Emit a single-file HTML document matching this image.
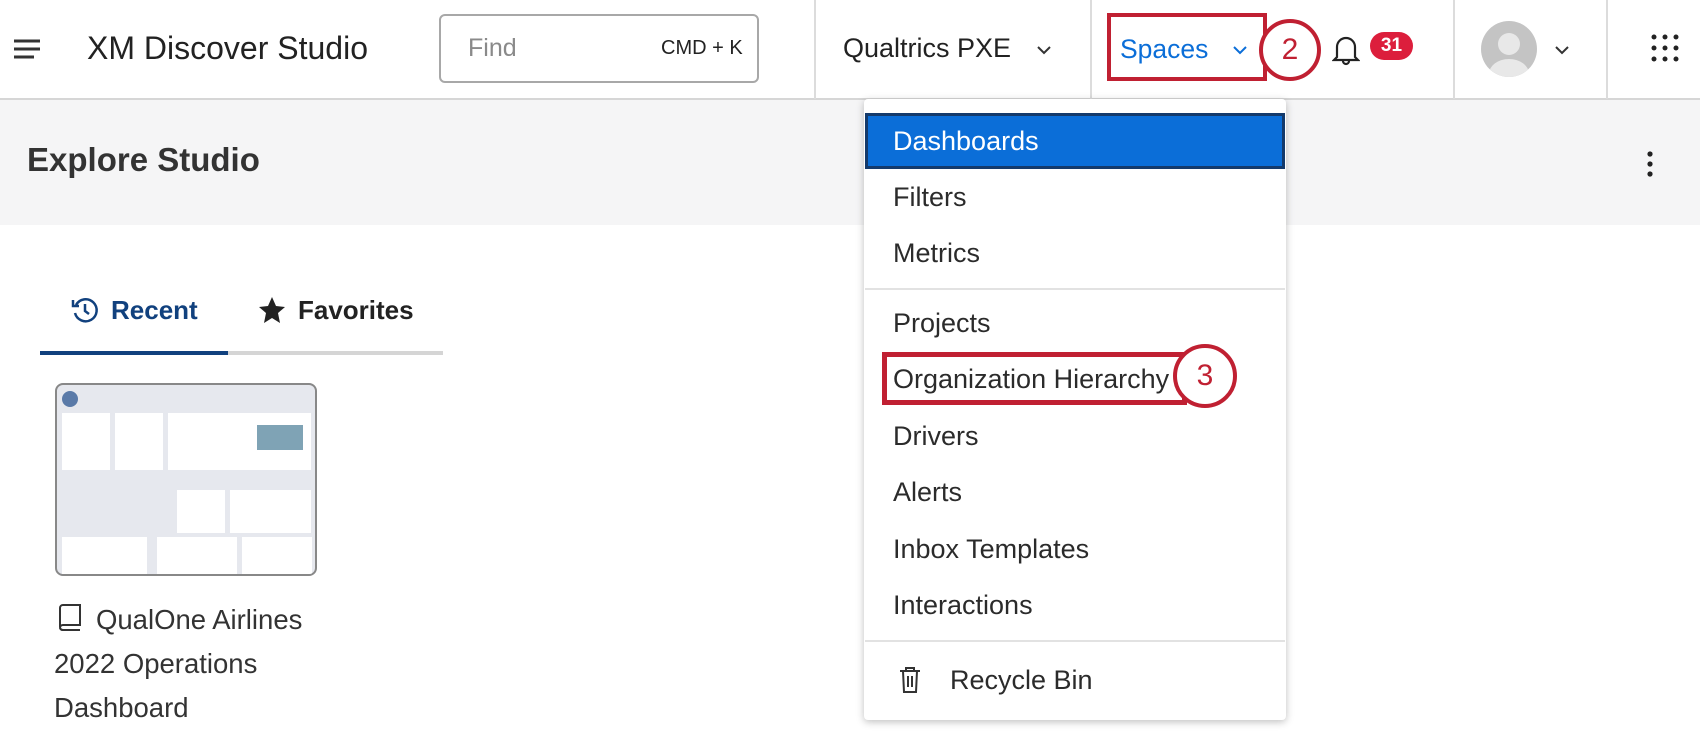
<!DOCTYPE html>
<html><head><meta charset="utf-8"><style>
*{box-sizing:border-box;margin:0;padding:0}
body{width:1700px;height:742px;position:relative;overflow:hidden;background:#fff;font-family:"Liberation Sans",sans-serif;color:#2b2b2b}
.a{position:absolute}
.hdr{left:0;top:0;width:1700px;height:100px;border-bottom:2px solid #d6d6d6;background:#fff}
.sep{top:0;width:2px;height:99px;background:#dcdcdc}
.gray{left:0;top:100px;width:1700px;height:125px;background:#f5f5f6}
.mi{position:absolute;left:893px;font-size:27px;color:#2b2b2b;line-height:30px}
</style></head><body>
<div class="a hdr"></div>
<svg class="a" style="left:14px;top:38px" width="28" height="22"><g stroke="#333" stroke-width="3"><line x1="0" y1="3" x2="26" y2="3"/><line x1="0" y1="11" x2="26" y2="11"/><line x1="0" y1="19" x2="20" y2="19"/></g></svg>
<div class="a" style="left:87px;top:30px;font-size:32px;color:#222">XM Discover Studio</div>
<div class="a" style="left:439px;top:14px;width:320px;height:69px;border:2px solid #a8a8a8;border-radius:6px"></div>
<div class="a" style="left:468px;top:34px;font-size:25px;color:#8a8a8a">Find</div>
<div class="a" style="left:661px;top:37px;font-size:20px;color:#222">CMD + K</div>
<div class="a sep" style="left:814px"></div>
<div class="a" style="left:843px;top:33px;font-size:27px;color:#222">Qualtrics PXE</div>
<svg class="a" style="left:1036px;top:45px" width="16" height="10"><path d="M2 2l6 6 6-6" fill="none" stroke="#333" stroke-width="2"/></svg>
<div class="a sep" style="left:1090px"></div>
<div class="a" style="left:1107px;top:13px;width:160px;height:68px;border:4px solid #c02032"></div>
<div class="a" style="left:1120px;top:34px;font-size:26.5px;color:#0b6ed8">Spaces</div>
<svg class="a" style="left:1232px;top:45px" width="16" height="10"><path d="M2 2l6 6 6-6" fill="none" stroke="#0b6ed8" stroke-width="2"/></svg>
<div class="a" style="left:1259px;top:19px;width:62px;height:62px;border:4px solid #c02032;border-radius:50%;background:#fff;text-align:center;font-size:30px;line-height:54px;color:#c02032">2</div>
<svg class="a" style="left:1332px;top:32px" width="28" height="34"><path d="M5 25V15a9 9 0 0 1 18 0v10l3 3H2z M11 29a3 3 0 0 0 6 0" fill="none" stroke="#222" stroke-width="2.2"/></svg>
<div class="a" style="left:1370px;top:32px;width:43px;height:28px;border-radius:14px;background:#dc1e3c;color:#fff;font-weight:bold;font-size:19px;text-align:center;line-height:28px">31</div>
<div class="a sep" style="left:1453px"></div>
<div class="a" style="left:1481px;top:21px;width:56px;height:56px;border-radius:50%;background:#c4c4c4;overflow:hidden"><div class="a" style="left:17px;top:12px;width:22px;height:22px;border-radius:50%;background:#e8e8e8"></div><div class="a" style="left:8px;top:38px;width:40px;height:30px;border-radius:50%;background:#e8e8e8"></div></div>
<svg class="a" style="left:1554px;top:45px" width="16" height="10"><path d="M2 2l6 6 6-6" fill="none" stroke="#333" stroke-width="2"/></svg>
<div class="a sep" style="left:1606px"></div>
<svg class="a" style="left:1651px;top:34px" width="30" height="30"><g fill="#222"><circle cx="3" cy="3" r="2.5"/><circle cx="14" cy="3" r="2.5"/><circle cx="25" cy="3" r="2.5"/><circle cx="3" cy="14" r="2.5"/><circle cx="14" cy="14" r="2.5"/><circle cx="25" cy="14" r="2.5"/><circle cx="3" cy="25" r="2.5"/><circle cx="14" cy="25" r="2.5"/><circle cx="25" cy="25" r="2.5"/></g></svg>
<div class="a gray"></div>
<div class="a" style="left:27px;top:141px;font-size:33px;font-weight:bold;color:#333">Explore Studio</div>
<svg class="a" style="left:1645px;top:151px" width="10" height="28"><g fill="#222"><circle cx="5" cy="3" r="2.6"/><circle cx="5" cy="13" r="2.6"/><circle cx="5" cy="23" r="2.6"/></g></svg>
<svg class="a" style="left:71px;top:296px" width="28" height="28"><path d="M5 9A11 11 0 1 1 4 17" fill="none" stroke="#11417e" stroke-width="2.5"/><path d="M2 4v6h6" fill="none" stroke="#11417e" stroke-width="2.5"/><path d="M14 8v7l4 3" fill="none" stroke="#11417e" stroke-width="2.5"/></svg>
<div class="a" style="left:111px;top:295px;font-size:26px;font-weight:bold;color:#11417e">Recent</div>
<svg class="a" style="left:258px;top:296px" width="28" height="28"><path d="M14 1l4 9 9 1-7 6 2 10-8-5-8 5 2-10-7-6 9-1z" fill="#222"/></svg>
<div class="a" style="left:298px;top:295px;font-size:26px;font-weight:bold;color:#222">Favorites</div>
<div class="a" style="left:40px;top:351px;width:403px;height:4px;background:#d5d5d5"></div>
<div class="a" style="left:40px;top:351px;width:188px;height:4px;background:#11417e"></div>
<div class="a" style="left:55px;top:383px;width:262px;height:193px;border:2px solid #888;border-radius:8px;background:#e6e8ee;overflow:hidden">
<div class="a" style="left:5px;top:6px;width:16px;height:16px;border-radius:50%;background:#5a7aa8"></div>
<div class="a" style="left:5px;top:28px;width:48px;height:57px;background:#fff"></div>
<div class="a" style="left:58px;top:28px;width:48px;height:57px;background:#fff"></div>
<div class="a" style="left:111px;top:28px;width:143px;height:57px;background:#fff"></div>
<div class="a" style="left:200px;top:40px;width:46px;height:25px;background:#7fa3b5"></div>
<div class="a" style="left:120px;top:105px;width:48px;height:43px;background:#fff"></div>
<div class="a" style="left:173px;top:105px;width:81px;height:43px;background:#fff"></div>
<div class="a" style="left:5px;top:152px;width:85px;height:40px;background:#fff"></div>
<div class="a" style="left:100px;top:152px;width:80px;height:40px;background:#fff"></div>
<div class="a" style="left:185px;top:152px;width:70px;height:40px;background:#fff"></div>
</div>
<svg class="a" style="left:56px;top:603px" width="28" height="28"><path d="M4 24V5a3 3 0 0 1 3-3h17v20H7a3 3 0 0 0-3 3 3 3 0 0 0 3 2h17" fill="none" stroke="#333" stroke-width="2"/></svg>
<div class="a" style="left:96px;top:598px;font-size:27.5px;color:#333;line-height:44px">QualOne Airlines</div>
<div class="a" style="left:54px;top:642px;font-size:27.5px;color:#333;line-height:44px">2022 Operations<br>Dashboard</div>
<div class="a" style="left:864px;top:99px;width:422px;height:621px;background:#fff;border-radius:4px;box-shadow:0 2px 8px rgba(0,0,0,.25)"></div>
<div class="a" style="left:865px;top:113px;width:420px;height:56px;background:#0b6ed8;border:3px solid #143a6b"></div>
<div class="mi" style="top:126px;color:#fff">Dashboards</div>
<div class="mi" style="top:182px">Filters</div>
<div class="mi" style="top:238px">Metrics</div>
<div class="a" style="left:865px;top:288px;width:420px;height:2px;background:#e2e2e2"></div>
<div class="mi" style="top:308px">Projects</div>
<div class="a" style="left:882px;top:352px;width:305px;height:53px;border:5px solid #c02032"></div>
<div class="mi" style="top:364px">Organization Hierarchy</div>
<div class="a" style="left:1173px;top:344px;width:64px;height:64px;border:4px solid #c02032;border-radius:50%;background:#fff;text-align:center;font-size:30px;line-height:56px;color:#c02032">3</div>
<div class="mi" style="top:421px">Drivers</div>
<div class="mi" style="top:477px">Alerts</div>
<div class="mi" style="top:534px">Inbox Templates</div>
<div class="mi" style="top:590px">Interactions</div>
<div class="a" style="left:865px;top:640px;width:420px;height:2px;background:#e2e2e2"></div>
<svg class="a" style="left:898px;top:666px" width="24" height="28"><path d="M2 5h20M8 5V2h8v3M5 5l1 21h12l1-21M10 10v11M14 10v11" fill="none" stroke="#333" stroke-width="2"/></svg>
<div class="mi" style="left:950px;top:665px">Recycle Bin</div>
</body></html>
